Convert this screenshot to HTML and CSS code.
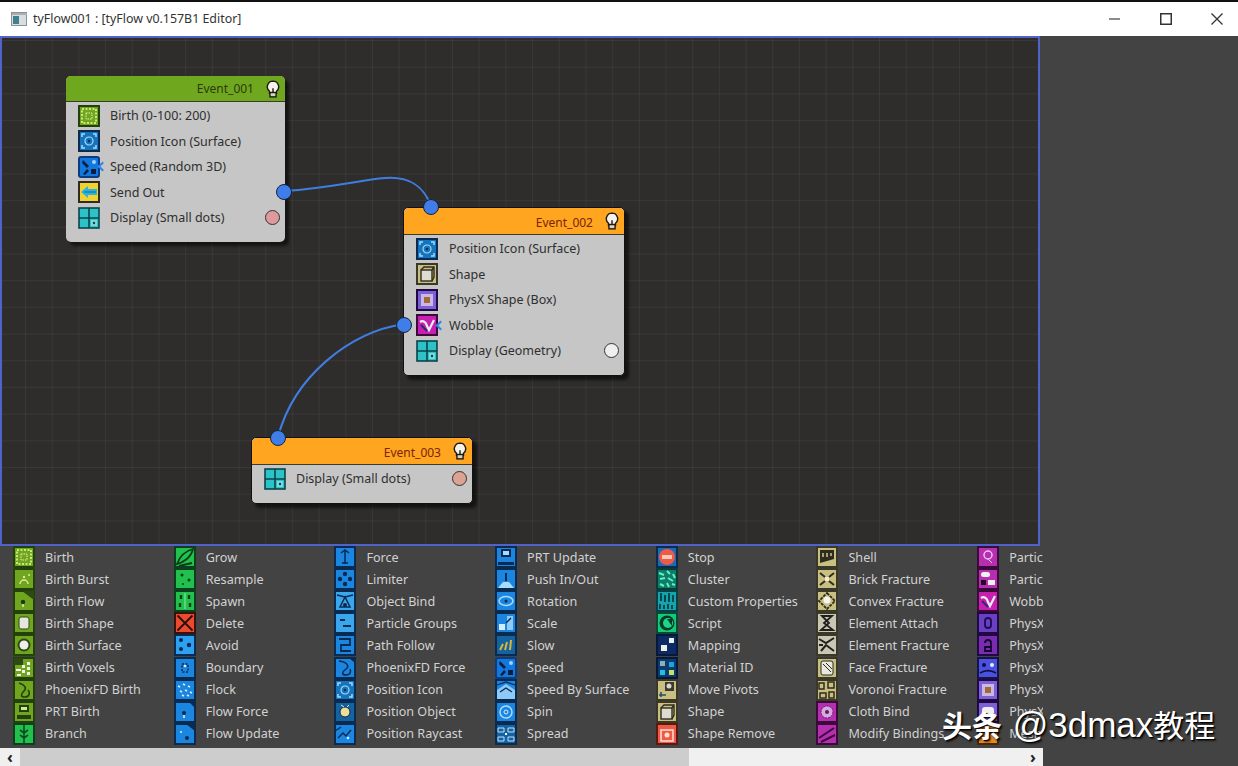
FILE: index.html
```html
<!DOCTYPE html>
<html lang="en">
<head>
<meta charset="UTF-8" />
<title>tyFlow001 : [tyFlow v0.157B1 Editor]</title>
<link rel="stylesheet" href="styles.css">
</head>
<body>

<svg class="defs" width="0" height="0">
  <!-- green birth tiles -->
  <symbol id="birth" viewBox="0 0 22 22"><rect class="t-green" x="1" y="1" width="20" height="20"/><rect x="4" y="4" width="14" height="14" fill="none" stroke="#c8e878" stroke-width="2" stroke-dasharray="2 1.5"/><rect x="8" y="8" width="6" height="6" fill="none" stroke="#e4f4a8" stroke-dasharray="1.5 1"/></symbol>
  <symbol id="burst" viewBox="0 0 22 22"><rect class="t-green" x="1" y="1" width="20" height="20"/><path d="M7 16a4 4 0 0 1 8 0" fill="none" stroke="#d4ec9a" stroke-width="1.5"/><circle cx="11" cy="9" r="1.2" fill="#d4ec9a"/><circle cx="16" cy="7" r="1" fill="#d4ec9a"/></symbol>
  <symbol id="bflow" viewBox="0 0 22 22"><rect class="t-green" x="1" y="1" width="20" height="20"/><path d="M9 1h12v9z" fill="#2c4a12"/><circle cx="10" cy="12" r="2.2" fill="#1e3a0e"/><path d="M10 14v3" stroke="#dff0a8" stroke-width="1.5"/></symbol>
  <symbol id="bshape" viewBox="0 0 22 22"><rect class="t-green" x="1" y="1" width="20" height="20"/><rect x="6" y="5" width="10" height="12" rx="2" fill="#e6e6e0" stroke="#2c4a12"/></symbol>
  <symbol id="bsurf" viewBox="0 0 22 22"><rect class="t-green" x="1" y="1" width="20" height="20"/><circle cx="11" cy="11" r="6.5" fill="#2c4a12"/><circle cx="11" cy="11" r="4.5" fill="#eeeeea"/></symbol>
  <symbol id="bvox" viewBox="0 0 22 22"><rect class="t-green" x="1" y="1" width="20" height="20"/><path d="M3 12h5v2H3zM9 8h3v3H9zM14 5h3v3h-3zM9 13h3v3H9zM14 10h3v3h-3zM4 17h4v2H4zM14 15h3v3h-3z" fill="#f2f2ea"/><path d="M1 1h9v7H1z" fill="#2c4a12"/></symbol>
  <symbol id="bphx" viewBox="0 0 22 22"><rect class="t-green" x="1" y="1" width="20" height="20"/><path d="M6 4c6 2 8 5 5 8s-4 6 1 6 5-5 3-7" fill="none" stroke="#24400e" stroke-width="1.6"/></symbol>
  <symbol id="bprt" viewBox="0 0 22 22"><rect class="t-green" x="1" y="1" width="20" height="20"/><rect x="6" y="4" width="10" height="7" fill="#24400e"/><rect x="8" y="6" width="6" height="3" fill="#cfe8a0"/><rect x="4" y="14" width="14" height="4" fill="#24400e"/></symbol>
  <symbol id="branch" viewBox="0 0 22 22"><rect class="t-bright" x="1" y="1" width="20" height="20"/><path d="M11 2v18M7 7l4 3 4-3M7 12l4 3 4-3" fill="none" stroke="#0c4a20" stroke-width="1.6"/></symbol>
  <symbol id="grow" viewBox="0 0 22 22"><rect class="t-bright" x="1" y="1" width="20" height="20"/><path d="M3 18C8 17 17 12 19 3 11 5 6 10 3 18zM5 20l13-3" fill="none" stroke="#0c3a1a" stroke-width="1.8"/></symbol>
  <symbol id="resample" viewBox="0 0 22 22"><rect class="t-bright" x="1" y="1" width="20" height="20"/><circle cx="8" cy="7" r="1.5" fill="#0c3a1a"/><circle cx="15" cy="12" r="1.5" fill="#0c3a1a"/><circle cx="9" cy="16" r="1" fill="#0c3a1a"/></symbol>
  <symbol id="spawn" viewBox="0 0 22 22"><rect class="t-bright" x="1" y="1" width="20" height="20"/><path d="M7 5v4M6 13v4M15 5v4M16 13v4" stroke="#0c3a1a" stroke-width="2.4"/><path d="M11 3v16" stroke="#8fe8a6"/></symbol>
  <symbol id="del" viewBox="0 0 22 22"><rect x="1" y="1" width="20" height="20" fill="#ea4a2e" stroke="#3a120c" stroke-width="2"/><path d="M3.5 3.5l15 15M18.5 3.5l-15 15" stroke="#2a0f0a" stroke-width="1.8"/></symbol>
  <!-- blue tiles -->
  <symbol id="avoid" viewBox="0 0 22 22"><rect x="1" y="1" width="20" height="20" fill="#2ea0f0" stroke="#0a2a50" stroke-width="2"/><circle cx="7" cy="6" r="2" fill="#0c2a50"/><circle cx="15" cy="11" r="2.2" fill="#0c2a50"/><circle cx="7" cy="15" r="2" fill="#0c2a50"/></symbol>
  <symbol id="boundary" viewBox="0 0 22 22"><rect class="t-blue" x="1" y="1" width="20" height="20"/><path d="M8 7h6v8H8z" fill="none" stroke="#0c2a50" stroke-width="1.5" stroke-dasharray="2 1.5"/><circle cx="11" cy="9" r="1.3" fill="#d8ecff"/></symbol>
  <symbol id="flock" viewBox="0 0 22 22"><rect class="t-blue" x="1" y="1" width="20" height="20"/><path d="M4 7l2 1M9 5l2 1M14 7l2 1M6 12l2 1M11 11l2 1M16 13l2 1M8 16l2 1M13 16l2 1" stroke="#e0f0ff" stroke-width="1.5"/></symbol>
  <symbol id="fforce" viewBox="0 0 22 22"><rect class="t-blue" x="1" y="1" width="20" height="20"/><path d="M15 1h6v6z" fill="#0c2a50"/><circle cx="10" cy="12" r="2" fill="#0c2a50"/><path d="M10 14v3" stroke="#e0f0ff" stroke-width="1.5"/></symbol>
  <symbol id="fupdate" viewBox="0 0 22 22"><rect class="t-blue" x="1" y="1" width="20" height="20"/><path d="M12 1h9v7z" fill="#0c2a50"/><circle cx="13" cy="15" r="2" fill="#0c2a50"/><circle cx="7" cy="9" r="1" fill="#e0f0ff"/></symbol>
  <symbol id="force" viewBox="0 0 22 22"><rect class="t-blue" x="1" y="1" width="20" height="20"/><path d="M11 4v14M7 7l4-3 4 3M8 17h6" fill="none" stroke="#0c2a50" stroke-width="1.5"/></symbol>
  <symbol id="limiter" viewBox="0 0 22 22"><rect class="t-blue" x="1" y="1" width="20" height="20"/><circle cx="11" cy="6" r="2.2" fill="#0c2a50"/><circle cx="6" cy="11" r="2.2" fill="#0c2a50"/><circle cx="16" cy="11" r="2.2" fill="#0c2a50"/><circle cx="11" cy="16" r="2.2" fill="#0c2a50"/></symbol>
  <symbol id="objbind" viewBox="0 0 22 22"><rect x="1" y="1" width="20" height="20" fill="#3aa6ec" stroke="#0a2a50" stroke-width="2"/><path d="M3 5l8 2 8-2M11 7l-5 10h10z" fill="none" stroke="#0c2a50" stroke-width="1.5"/><circle cx="11" cy="15" r="2" fill="#0c2a50"/></symbol>
  <symbol id="pgroup" viewBox="0 0 22 22"><rect x="1" y="1" width="20" height="20" fill="#3aa6ec" stroke="#0a2a50" stroke-width="2"/><path d="M6 8h5M9 14h8" stroke="#0c2a50" stroke-width="1.8"/></symbol>
  <symbol id="pathf" viewBox="0 0 22 22"><rect class="t-blue" x="1" y="1" width="20" height="20"/><path d="M5 5h11v6H7v6h10" fill="none" stroke="#0c2a50" stroke-width="1.8"/></symbol>
  <symbol id="phxf" viewBox="0 0 22 22"><rect class="t-blue" x="1" y="1" width="20" height="20"/><path d="M5 4c8 1 11 5 7 8s-5 6 0 6 5-4 4-6" fill="none" stroke="#0c2a50" stroke-width="1.5"/><path d="M15 1h6v5z" fill="#0c2a50"/></symbol>
  <symbol id="posicon" viewBox="0 0 22 22"><rect x="1" y="1" width="20" height="20" fill="#1474bc" stroke="#0a2a50" stroke-width="2"/><path d="M4 7V4h3M15 4h3v3M18 15v3h-3M7 18H4v-3" fill="none" stroke="#a8d8f8" stroke-width="1.5"/><circle cx="11" cy="11" r="4" fill="none" stroke="#a8d8f8" stroke-width="1.2"/><circle cx="11" cy="11" r="1.2" fill="#0c2a50"/></symbol>
  <symbol id="posobj" viewBox="0 0 22 22"><rect x="1" y="1" width="20" height="20" fill="#14629e" stroke="#0a2a50" stroke-width="2"/><circle cx="11" cy="11" r="5" fill="#f0dd9a" stroke="#0c2a50"/><path d="M7 4l3 2M15 4l-2 2" stroke="#d8ecff"/></symbol>
  <symbol id="posray" viewBox="0 0 22 22"><rect class="t-blue" x="1" y="1" width="20" height="20"/><path d="M4 15l5-5 3 3 5-6M1 8l6-4" fill="none" stroke="#0c2a50" stroke-width="1.5"/><circle cx="14" cy="15" r="1.3" fill="#d8ecff"/></symbol>
  <symbol id="prtup" viewBox="0 0 22 22"><rect class="t-blue" x="1" y="1" width="20" height="20"/><rect x="6" y="3" width="10" height="8" fill="#0c2a50"/><rect x="8" y="5" width="6" height="4" fill="#a8dcff"/><path d="M3 16h16v3H3z" fill="#0c2a50"/></symbol>
  <symbol id="pushio" viewBox="0 0 22 22"><rect class="t-blue" x="1" y="1" width="20" height="20"/><path d="M11 5v8" stroke="#0c2a50" stroke-width="2"/><path d="M3 20l5-6h6l5 6z" fill="#a8dcff"/></symbol>
  <symbol id="rotation" viewBox="0 0 22 22"><rect class="t-blue" x="1" y="1" width="20" height="20"/><ellipse cx="11" cy="11" rx="7" ry="4.5" fill="none" stroke="#a8dcff" stroke-width="1.5"/><circle cx="11" cy="11" r="1.5" fill="#0c2a50"/></symbol>
  <symbol id="scale" viewBox="0 0 22 22"><rect class="t-blue" x="1" y="1" width="20" height="20"/><rect x="4" y="12" width="6" height="6" fill="#d8ecff"/><path d="M12 4h6v14h-6z" fill="#8ccaf8"/><path d="M11 11l5-5" stroke="#0c2a50" stroke-width="1.5"/></symbol>
  <symbol id="slow" viewBox="0 0 22 22"><rect x="1" y="1" width="20" height="20" fill="#14629e" stroke="#0a2a50" stroke-width="2"/><path d="M5 16l3-6M10 16l2-8M15 16l1-10" stroke="#d8b83a" stroke-width="2"/></symbol>
  <symbol id="speed" viewBox="0 0 22 22"><rect x="1" y="1" width="20" height="20" rx="2" fill="#1278e0" stroke="#0a3c80" stroke-width="2"/><path d="M5 4l6 6-2 2-5-5zM5 18l4-5 2 2-4 4z" fill="#0a1e3c"/><circle cx="16" cy="6" r="2" fill="#9fd2ff"/><rect x="13" y="13" width="5" height="5" fill="#0a1e3c"/></symbol>
  <symbol id="speedsurf" viewBox="0 0 22 22"><rect class="t-blue" x="1" y="1" width="20" height="20"/><path d="M2 11l9-6 9 6v9H2z" fill="#8ccaf8"/><path d="M2 6l9-3 9 3M5 13l6-4 6 4" fill="none" stroke="#0c2a50" stroke-width="1.3"/></symbol>
  <symbol id="spin" viewBox="0 0 22 22"><rect class="t-blue" x="1" y="1" width="20" height="20"/><circle cx="11" cy="11" r="6" fill="none" stroke="#a8dcff" stroke-width="1.5"/><circle cx="11" cy="11" r="2" fill="none" stroke="#d8ecff"/></symbol>
  <symbol id="spread" viewBox="0 0 22 22"><rect x="1" y="1" width="20" height="20" fill="#14629e" stroke="#0a2a50" stroke-width="2"/><path d="M3 5h6v4H3zM13 5h6v4h-6zM3 14h6v4H3zM13 14h6v4h-6z" fill="none" stroke="#bfe2ff"/><rect x="10" y="10" width="2" height="2" fill="#fff"/></symbol>
  <!-- misc tiles -->
  <symbol id="stop" viewBox="0 0 22 22"><rect x="1" y="1" width="20" height="20" fill="#1c6cb4" stroke="#0a2a50" stroke-width="2"/><circle cx="11" cy="11" r="8" fill="#ee5a44"/><rect x="6" y="9" width="10" height="4" fill="#f8c8b8"/></symbol>
  <symbol id="cluster" viewBox="0 0 22 22"><rect x="1" y="1" width="20" height="20" fill="#0f7c68" stroke="#083c34" stroke-width="2"/><path d="M3 5l5 2M11 3l3 3M17 6l2 4M4 11l5-1M12 10l5 3M4 16l4 2M11 15l2 4M16 16l3 1" stroke="#5ff0c8" stroke-width="2"/></symbol>
  <symbol id="custom" viewBox="0 0 22 22"><rect x="1" y="1" width="20" height="20" fill="#14a4ac" stroke="#08404a" stroke-width="2"/><path d="M5 3v8M9 5v7M13 3v9M17 5v7M4 14v5M8 15v4M12 14v5M16 15v4" stroke="#063038" stroke-width="1.6"/></symbol>
  <symbol id="script" viewBox="0 0 22 22"><rect x="1" y="1" width="20" height="20" fill="#12c97c" stroke="#0a4a30" stroke-width="2"/><circle cx="11" cy="11" r="7.5" fill="#0c3a28"/><circle cx="12" cy="11" r="5" fill="#18d888"/><path d="M11 7h5v7z" fill="#0c3a28"/></symbol>
  <symbol id="mapping" viewBox="0 0 22 22"><rect x="1" y="1" width="20" height="20" fill="#0c2a66" stroke="#071838" stroke-width="2"/><rect x="5" y="11" width="6" height="6" fill="#eef0e0"/><rect x="13" y="4" width="5" height="5" fill="#eef0e0"/></symbol>
  <symbol id="matid" viewBox="0 0 22 22"><rect x="1" y="1" width="20" height="20" fill="#0c3a70" stroke="#071838" stroke-width="2"/><rect x="4" y="4" width="5" height="5" fill="#8ab0b8"/><rect x="13" y="5" width="5" height="5" fill="#20a4d8"/><rect x="4" y="13" width="5" height="5" fill="#20c0e0"/><rect x="13" y="13" width="5" height="5" fill="#c8e060"/></symbol>
  <symbol id="pivots" viewBox="0 0 22 22"><rect class="t-tan" x="1" y="1" width="20" height="20"/><rect x="9" y="3" width="9" height="9" fill="#3a3a30"/><circle cx="13" cy="7" r="2.5" fill="#d8d8c8"/><path d="M3 16h7M5 13v5" stroke="#20506a" stroke-width="1.6"/></symbol>
  <symbol id="shape" viewBox="0 0 22 22"><rect class="t-tan" x="1" y="1" width="20" height="20"/><rect x="5" y="7" width="11" height="11" fill="#dedcd0" stroke="#2e2c20" stroke-width="1.4"/><path d="M5 7l3-3h10v10l-2 4M16 7l2-3" fill="none" stroke="#2e2c20" stroke-width="1.4"/></symbol>
  <symbol id="shaperem" viewBox="0 0 22 22"><rect x="1" y="1" width="20" height="20" fill="#ee5a44" stroke="#5a1a10" stroke-width="2"/><rect x="5" y="7" width="12" height="11" fill="none" stroke="#ffe0d8" stroke-width="1.5"/><circle cx="11" cy="12" r="2.5" fill="#ffe0d8"/></symbol>
  <symbol id="shell" viewBox="0 0 22 22"><rect class="t-tan" x="1" y="1" width="20" height="20"/><path d="M4 4h14v9l-14 4z" fill="#2e2c20"/><path d="M7 7v4M11 7v4M15 7v3" stroke="#d4c88a" stroke-width="1.5"/></symbol>
  <symbol id="brick" viewBox="0 0 22 22"><rect class="t-tan" x="1" y="1" width="20" height="20"/><path d="M4 5l5 4M18 5l-5 4M4 17l5-4M18 17l-5-4" stroke="#2e2c20" stroke-width="2"/><rect x="9" y="9" width="4" height="4" fill="#f0ecd0"/></symbol>
  <symbol id="convex" viewBox="0 0 22 22"><rect class="t-tan" x="1" y="1" width="20" height="20"/><path d="M11 3l8 8-8 8-8-8z" fill="none" stroke="#2e2c20" stroke-width="1.8" stroke-dasharray="3 1"/><circle cx="11" cy="10" r="3.5" fill="#f4f4f4"/></symbol>
  <symbol id="attach" viewBox="0 0 22 22"><rect x="1" y="1" width="20" height="20" fill="#c8c6b4" stroke="#3a3828" stroke-width="2"/><path d="M6 4h10l-8 7 9 7H5l8-7z" fill="none" stroke="#20201a" stroke-width="1.8"/></symbol>
  <symbol id="efrac" viewBox="0 0 22 22"><rect x="1" y="1" width="20" height="20" fill="#c8c6b4" stroke="#3a3828" stroke-width="2"/><path d="M3 5l7 4 8-5M5 17l5-6 8 6M3 11h4" fill="none" stroke="#20201a" stroke-width="2"/></symbol>
  <symbol id="face" viewBox="0 0 22 22"><rect class="t-tan" x="1" y="1" width="20" height="20"/><rect x="5" y="4" width="12" height="14" rx="2" fill="#e8e8de" stroke="#2e2c20"/><path d="M7 7l8 8M10 6l6 6" stroke="#2e2c20"/></symbol>
  <symbol id="voronoi" viewBox="0 0 22 22"><rect class="t-tan" x="1" y="1" width="20" height="20"/><path d="M3 4h5v6H3zM12 3h6v6h-6zM4 14h6v5H4zM13 13h5v6h-5z" fill="none" stroke="#2e2c20" stroke-width="1.5"/></symbol>
  <symbol id="clothb" viewBox="0 0 22 22"><rect class="t-mag" x="1" y="1" width="20" height="20"/><circle cx="11" cy="11" r="6" fill="#d8a8e0" stroke="#601c60" stroke-dasharray="2 1"/><circle cx="11" cy="11" r="2" fill="#601c60"/></symbol>
  <symbol id="modbind" viewBox="0 0 22 22"><rect class="t-mag" x="1" y="1" width="20" height="20"/><path d="M3 15L18 5M5 19l14-7" stroke="#3a0a3a" stroke-width="2"/></symbol>
  <symbol id="pbreak" viewBox="0 0 22 22"><rect class="t-mag" x="1" y="1" width="20" height="20"/><circle cx="11" cy="9" r="4" fill="none" stroke="#ecc4ec" stroke-width="1.5"/><path d="M11 13l4 4" stroke="#ecc4ec"/></symbol>
  <symbol id="pswitch" viewBox="0 0 22 22"><rect class="t-mag" x="1" y="1" width="20" height="20"/><rect x="4" y="4" width="9" height="5" rx="2.5" fill="#f0f0f0"/><rect x="4" y="12" width="5" height="5" fill="#200820"/><rect x="11" y="12" width="7" height="5" fill="#f0f0f0"/></symbol>
  <symbol id="wobble" viewBox="0 0 22 22"><rect x="1" y="1" width="20" height="20" fill="#c81fb0" stroke="#3a0a3a" stroke-width="2"/><path d="M4 8c3-2 6 0 7 4l2 4 5-10" fill="none" stroke="#e8eef8" stroke-width="2.2"/><path d="M5 11l6 6" stroke="#2a2a70" stroke-width="1.8"/></symbol>
  <symbol id="pxbind" viewBox="0 0 22 22"><rect class="t-pur" x="1" y="1" width="20" height="20"/><rect x="8" y="6" width="6" height="10" rx="3" fill="none" stroke="#1c0c50" stroke-width="1.8"/></symbol>
  <symbol id="pxcoll" viewBox="0 0 22 22"><rect x="1" y="1" width="20" height="20" fill="#7a2cb0" stroke="#200840" stroke-width="2"/><path d="M8 9a3 3 0 0 1 6 0v8H8v-4h6" fill="none" stroke="#14062e" stroke-width="1.8"/></symbol>
  <symbol id="pxgroup" viewBox="0 0 22 22"><rect x="1" y="1" width="20" height="20" fill="#4a50e0" stroke="#141448" stroke-width="2"/><circle cx="7" cy="8" r="2" fill="#101040"/><circle cx="15" cy="8" r="2" fill="#e8ecff"/><path d="M3 16c5-3 11-3 16 0" fill="none" stroke="#101040" stroke-width="1.8"/></symbol>
  <symbol id="pxshape" viewBox="0 0 22 22"><rect x="1" y="1" width="20" height="20" fill="#7d5fd8" stroke="#200840" stroke-width="2"/><rect x="5" y="5" width="12" height="12" fill="#c8b8e8"/><rect x="8" y="8" width="6" height="6" fill="#a06a30"/></symbol>
  <symbol id="pxswitch" viewBox="0 0 22 22"><rect x="1" y="1" width="20" height="20" fill="#7d5fd8" stroke="#200840" stroke-width="2"/><rect x="5" y="6" width="12" height="8" rx="3" fill="#f0f0f0"/></symbol>
  <symbol id="mesh" viewBox="0 0 22 22"><rect x="1" y="1" width="20" height="20" fill="#e8891c" stroke="#4a2808" stroke-width="2"/><path d="M5 6h12M5 11h12" stroke="#4a2808"/></symbol>
  <symbol id="send" viewBox="0 0 22 22"><rect x="1" y="1" width="20" height="20" fill="#f2d22e" stroke="#2e2c20" stroke-width="2"/><path d="M3 11l7-6v3h9v6h-9v3z" fill="#2ab4e4"/><path d="M6 11h12" stroke="#0e6a90"/></symbol>
  <symbol id="display" viewBox="0 0 22 22"><rect x="1" y="1" width="20" height="20" fill="#2cc2c8" stroke="#0a4448" stroke-width="1.6"/><path d="M11 1v20M1 11h20" stroke="#0a4448" stroke-width="1.6"/><rect x="13" y="13" width="6" height="6" fill="#7ad8dc"/><circle cx="16" cy="16" r="1.2" fill="#0a4448"/></symbol>
  <symbol id="bulb" viewBox="0 0 16 20"><path d="M8 1a6.5 6.5 0 0 0-4 11.600V15h8v-2.400A6.5 6.5 0 0 0 8 1z" fill="#f4f2ea" stroke="#1e1a10" stroke-width="1.6"/><rect x="4.5" y="14" width="7" height="5" fill="#d8d4c0" stroke="#1e1a10" stroke-width="1.6"/><path d="M8 9v5" stroke="#1e1a10" stroke-width="1.6"/></symbol>
</svg>

<header class="titlebar">
  <svg class="app-icon" viewBox="0 0 16 14"><rect x=".5" y=".5" width="15" height="13" fill="#d8dde0" stroke="#8a9298"/><rect x="1" y="1" width="15" height="2" fill="#a8b0b6"/><rect x="2" y="4" width="6" height="8" fill="#3f7f8f"/></svg>
  <span class="title">tyFlow001 : [tyFlow v0.157B1 Editor]</span>
  <div class="win-btns">
    <svg viewBox="0 0 12 12"><path d="M0 6h11" stroke="#666" stroke-width="1.5"/></svg>
    <svg viewBox="0 0 12 12"><rect x=".75" y=".75" width="10.5" height="10.5" fill="none" stroke="#333" stroke-width="1.5"/></svg>
    <svg viewBox="0 0 12 12"><path d="M.5 .5l11 11M11.5 .5l-11 11" stroke="#333" stroke-width="1.3"/></svg>
  </div>
</header>

<div class="workspace">
  <div class="editor">

    <section class="canvas">
      <svg class="wires" width="1040" height="509">
        <path d="M284 155 C330 152 360 144 385 142 C408 140 424 150 431 170"/>
        <path d="M404 288 C350 296 294 340 278 401"/>
      </svg>

      <div class="node node-one">
        <div class="node-head"><span class="node-name">Event_001</span><svg class="bulb"><use href="#bulb"/></svg></div>
        <div class="op"><svg class="op-icon"><use href="#birth"/></svg><span>Birth (0-100: 200)</span></div>
        <div class="op"><svg class="op-icon"><use href="#posicon"/></svg><span>Position Icon (Surface)</span></div>
        <div class="op"><svg class="op-icon"><use href="#speed"/></svg><i class="flag"></i><span>Speed (Random 3D)</span></div>
        <div class="op"><svg class="op-icon"><use href="#send"/></svg><span>Send Out</span><b class="port port-out"></b></div>
        <div class="op"><svg class="op-icon"><use href="#display"/></svg><span>Display (Small dots)</span><b class="state state-pink"></b></div>
      </div>

      <div class="node node-two">
        <b class="port port-top"></b>
        <div class="node-head head-orange"><span class="node-name">Event_002</span><svg class="bulb"><use href="#bulb"/></svg></div>
        <div class="op"><svg class="op-icon"><use href="#posicon"/></svg><span>Position Icon (Surface)</span></div>
        <div class="op"><svg class="op-icon"><use href="#shape"/></svg><span>Shape</span></div>
        <div class="op"><svg class="op-icon"><use href="#pxshape"/></svg><span>PhysX Shape (Box)</span></div>
        <div class="op"><b class="port port-in"></b><svg class="op-icon"><use href="#wobble"/></svg><i class="flag"></i><span>Wobble</span></div>
        <div class="op"><svg class="op-icon"><use href="#display"/></svg><span>Display (Geometry)</span><b class="state state-white"></b></div>
      </div>

      <div class="node node-three">
        <b class="port port-top"></b>
        <div class="node-head head-orange"><span class="node-name">Event_003</span><svg class="bulb"><use href="#bulb"/></svg></div>
        <div class="op"><svg class="op-icon"><use href="#display"/></svg><span>Display (Small dots)</span><b class="state state-salmon"></b></div>
      </div>
    </section>

    <section class="palette">
      <div class="pal-item"><svg><use href="#birth"/></svg>Birth</div>
      <div class="pal-item"><svg><use href="#burst"/></svg>Birth Burst</div>
      <div class="pal-item"><svg><use href="#bflow"/></svg>Birth Flow</div>
      <div class="pal-item"><svg><use href="#bshape"/></svg>Birth Shape</div>
      <div class="pal-item"><svg><use href="#bsurf"/></svg>Birth Surface</div>
      <div class="pal-item"><svg><use href="#bvox"/></svg>Birth Voxels</div>
      <div class="pal-item"><svg><use href="#bphx"/></svg>PhoenixFD Birth</div>
      <div class="pal-item"><svg><use href="#bprt"/></svg>PRT Birth</div>
      <div class="pal-item"><svg><use href="#branch"/></svg>Branch</div>

      <div class="pal-item"><svg><use href="#grow"/></svg>Grow</div>
      <div class="pal-item"><svg><use href="#resample"/></svg>Resample</div>
      <div class="pal-item"><svg><use href="#spawn"/></svg>Spawn</div>
      <div class="pal-item"><svg><use href="#del"/></svg>Delete</div>
      <div class="pal-item"><svg><use href="#avoid"/></svg>Avoid</div>
      <div class="pal-item"><svg><use href="#boundary"/></svg>Boundary</div>
      <div class="pal-item"><svg><use href="#flock"/></svg>Flock</div>
      <div class="pal-item"><svg><use href="#fforce"/></svg>Flow Force</div>
      <div class="pal-item"><svg><use href="#fupdate"/></svg>Flow Update</div>

      <div class="pal-item"><svg><use href="#force"/></svg>Force</div>
      <div class="pal-item"><svg><use href="#limiter"/></svg>Limiter</div>
      <div class="pal-item"><svg><use href="#objbind"/></svg>Object Bind</div>
      <div class="pal-item"><svg><use href="#pgroup"/></svg>Particle Groups</div>
      <div class="pal-item"><svg><use href="#pathf"/></svg>Path Follow</div>
      <div class="pal-item"><svg><use href="#phxf"/></svg>PhoenixFD Force</div>
      <div class="pal-item"><svg><use href="#posicon"/></svg>Position Icon</div>
      <div class="pal-item"><svg><use href="#posobj"/></svg>Position Object</div>
      <div class="pal-item"><svg><use href="#posray"/></svg>Position Raycast</div>

      <div class="pal-item"><svg><use href="#prtup"/></svg>PRT Update</div>
      <div class="pal-item"><svg><use href="#pushio"/></svg>Push In/Out</div>
      <div class="pal-item"><svg><use href="#rotation"/></svg>Rotation</div>
      <div class="pal-item"><svg><use href="#scale"/></svg>Scale</div>
      <div class="pal-item"><svg><use href="#slow"/></svg>Slow</div>
      <div class="pal-item"><svg><use href="#speed"/></svg>Speed</div>
      <div class="pal-item"><svg><use href="#speedsurf"/></svg>Speed By Surface</div>
      <div class="pal-item"><svg><use href="#spin"/></svg>Spin</div>
      <div class="pal-item"><svg><use href="#spread"/></svg>Spread</div>

      <div class="pal-item"><svg><use href="#stop"/></svg>Stop</div>
      <div class="pal-item"><svg><use href="#cluster"/></svg>Cluster</div>
      <div class="pal-item"><svg><use href="#custom"/></svg>Custom Properties</div>
      <div class="pal-item"><svg><use href="#script"/></svg>Script</div>
      <div class="pal-item"><svg><use href="#mapping"/></svg>Mapping</div>
      <div class="pal-item"><svg><use href="#matid"/></svg>Material ID</div>
      <div class="pal-item"><svg><use href="#pivots"/></svg>Move Pivots</div>
      <div class="pal-item"><svg><use href="#shape"/></svg>Shape</div>
      <div class="pal-item"><svg><use href="#shaperem"/></svg>Shape Remove</div>

      <div class="pal-item"><svg><use href="#shell"/></svg>Shell</div>
      <div class="pal-item"><svg><use href="#brick"/></svg>Brick Fracture</div>
      <div class="pal-item"><svg><use href="#convex"/></svg>Convex Fracture</div>
      <div class="pal-item"><svg><use href="#attach"/></svg>Element Attach</div>
      <div class="pal-item"><svg><use href="#efrac"/></svg>Element Fracture</div>
      <div class="pal-item"><svg><use href="#face"/></svg>Face Fracture</div>
      <div class="pal-item"><svg><use href="#voronoi"/></svg>Voronoi Fracture</div>
      <div class="pal-item"><svg><use href="#clothb"/></svg>Cloth Bind</div>
      <div class="pal-item"><svg><use href="#modbind"/></svg>Modify Bindings</div>

      <div class="pal-item"><svg><use href="#pbreak"/></svg>Particle Break</div>
      <div class="pal-item"><svg><use href="#pswitch"/></svg>Particle Switch</div>
      <div class="pal-item"><svg><use href="#wobble"/></svg>Wobble</div>
      <div class="pal-item"><svg><use href="#pxbind"/></svg>PhysX Bind</div>
      <div class="pal-item"><svg><use href="#pxcoll"/></svg>PhysX Collision</div>
      <div class="pal-item"><svg><use href="#pxgroup"/></svg>PhysX Group</div>
      <div class="pal-item"><svg><use href="#pxshape"/></svg>PhysX Shape</div>
      <div class="pal-item"><svg><use href="#pxswitch"/></svg>PhysX Switch</div>
      <div class="pal-item"><svg><use href="#mesh"/></svg>Mesh</div>
    </section>

    <div class="scrollbar">
      <span class="arrow">&#8249;</span>
      <div class="thumb"></div>
      <span class="arrow">&#8250;</span>
    </div>
  </div>

  <aside class="side"></aside>
</div>

<div class="watermark"><b>头条</b> @3dmax<span class="wm-cjk">教程</span></div>

</body>
</html>
```

FILE: styles.css
```css
html, body {
  margin: 0;
  padding: 0;
  height: 100%;
  overflow: hidden;
}
body {
  width: 1238px;
  height: 766px;
  background: #434343;
  font-family: "Noto Sans", "Liberation Sans", sans-serif;
  font-size: 13px;
  position: relative;
  display: flex;
  flex-direction: column;
}
.defs {
  position: absolute;
}

/* svg tile colours */
.t-green { fill: #6fa51f; stroke: #23400d; stroke-width: 2; }
.t-bright { fill: #22c04c; stroke: #0b3f1e; stroke-width: 2; }
.t-blue { fill: #1a86e0; stroke: #0a2a50; stroke-width: 2; }
.t-tan { fill: #c9bf80; stroke: #3a3828; stroke-width: 2; }
.t-mag { fill: #b52fb0; stroke: #3a0a3a; stroke-width: 2; }
.t-pur { fill: #6b3fc4; stroke: #200840; stroke-width: 2; }

/* title bar */
.titlebar {
  height: 34px;
  margin-top: 2px;
  background: #fff;
  display: flex;
  align-items: center;
  padding-left: 11px;
  color: #333;
  flex: none;
  box-shadow: 0 -2px 0 #111;
}
.app-icon {
  width: 16px;
  height: 14px;
  margin-right: 6px;
}
.title {
  font-size: 12.4px;
  margin-bottom: 2px;
}
.win-btns {
  margin-left: auto;
  display: flex;
  gap: 39px;
  padding-right: 15px;
}
.win-btns svg {
  width: 12px;
  height: 12px;
}

.workspace {
  flex: 1;
  display: flex;
  min-height: 0;
}
.editor {
  width: 1043px;
  display: flex;
  flex-direction: column;
}
.side {
  flex: 1;
  background: #434343;
}

/* node canvas */
.canvas {
  position: relative;
  box-sizing: border-box;
  width: 1040px;
  height: 510px;
  flex: none;
  border: 2px solid #4f63c8;
  background-color: #2e2d2c;
  background-image:
    linear-gradient(rgba(255,255,255,.05) 1px, transparent 1px),
    linear-gradient(90deg, rgba(255,255,255,.05) 1px, transparent 1px);
  background-size: 26.7px 26.7px;
  background-position: 23px 2px;
}
.wires {
  position: absolute;
  left: -2px;
  top: -2px;
  z-index: 2;
  pointer-events: none;
}
.wires path {
  fill: none;
  stroke: #3f7ee0;
  stroke-width: 2;
}

.node {
  position: absolute;
  width: 219px;
  background: #c6c6c6;
  border-radius: 5px;
  box-shadow: 4px 4px 3px rgba(0,0,0,.55);
  padding-bottom: 11px;
}
.node-one { left: 64px; top: 38px; }
.node-two { left: 401px; top: 169px; width: 222px; border: 1px solid #111; box-sizing: border-box; }
.node-three { left: 249px; top: 399px; border: 1px solid #111; width: 222px; box-sizing: border-box; }

.node-head {
  height: 25px;
  background: #6fa81e;
  border-bottom: 1px solid #3c3c2c;
  border-radius: 5px 5px 0 0;
  display: flex;
  align-items: center;
  justify-content: flex-end;
  padding-right: 3px;
  margin-bottom: 1px;
  color: #2c3a10;
  font-size: 12px;
}
.head-orange {
  height: 26px;
  background: #ffa51f;
  color: #7a2408;
}
.head-orange .node-name {
  padding-top: 3px;
}
.node-name {
  margin-right: 12px;
}
.bulb {
  width: 14px;
  height: 18px;
  margin-right: 2px;
}

.op {
  position: relative;
  height: 25.5px;
  display: flex;
  align-items: center;
  padding-left: 12px;
  color: #2f2f2f;
  font-size: 12.5px;
}
.op-icon {
  width: 22px;
  height: 22px;
  margin-right: 10px;
  flex: none;
}
.node-two .op-icon {
  margin-right: 11px;
}
.flag {
  position: absolute;
  left: 33px;
  width: 5px;
  height: 5px;
  border-left: 2px solid #2f86e8;
  border-bottom: 2px solid #2f86e8;
  transform: rotate(45deg);
}

.port {
  position: absolute;
  width: 14px;
  height: 14px;
  border-radius: 50%;
  background: #3f7ee8;
  border: 1px solid #14243c;
  z-index: 3;
}
.port-out { right: -7px; top: 4px; }
.port-in { left: -8px; top: 4px; }
.port-top { left: 18px; top: -8px; }
.node-two > .port-top { left: 19px; top: -9px; }

.state {
  position: absolute;
  right: 5px;
  top: 5px;
  width: 13px;
  height: 13px;
  border-radius: 50%;
  border: 1px solid #333;
}
.state-pink { background: #df9a9c; }
.state-white { background: #efeff2; }
.state-salmon { background: #dca393; }

/* operator palette */
.palette {
  flex: 1;
  min-height: 0;
  overflow: hidden;
  background: #434343;
  display: grid;
  grid-auto-flow: column;
  grid-template-rows: repeat(9, 22.1px);
  grid-auto-columns: 160.7px;
  padding-left: 13px;
  color: #d2d2d2;
}
.pal-item {
  display: flex;
  align-items: center;
  gap: 10px;
  white-space: nowrap;
  overflow: hidden;
  font-size: 12.6px;
}
.pal-item svg {
  width: 22px;
  height: 22px;
  flex: none;
}

.scrollbar {
  height: 18px;
  flex: none;
  background: #f0f0f0;
  display: flex;
  align-items: center;
}
.arrow {
  width: 20px;
  text-align: center;
  color: #222;
  font-size: 16px;
  font-weight: bold;
  line-height: 18px;
}
.thumb {
  width: 669px;
  height: 18px;
  background: #cdcdcd;
  margin-right: auto;
}

.watermark {
  position: absolute;
  left: 942px;
  top: 705px;
  color: #fff;
  font-family: "Liberation Sans", "Noto Sans CJK SC", sans-serif;
  font-size: 35px;
  line-height: 40px;
  white-space: nowrap;
  text-shadow: 1px 1px 1px #000, 2px 2px 2px rgba(0,0,0,.6);
}
.watermark b {
  font-size: 30px;
  margin-right: 1px;
}
.wm-cjk {
  font-size: 31px;
}
```
